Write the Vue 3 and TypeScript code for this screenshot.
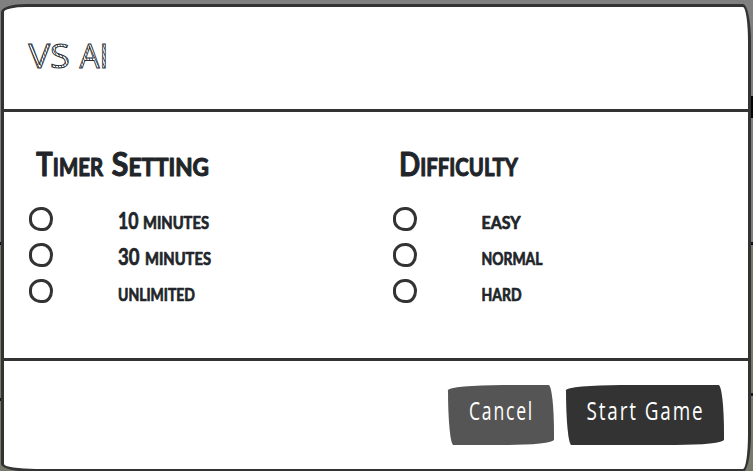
<script setup lang="ts">
import { ref } from 'vue'

interface Word { cap: string; rest: string; x: number; width: number }
interface Choice { value: string; words: Word[] }
interface Group { name: string; title: Word[]; choices: Choice[] }

const word = (cap: string, rest: string, x: number, width: number): Word => ({ cap, rest, x, width })

const groups: Group[] = [
  {
    name: 'timer',
    title: [word('T', 'IMER', 0, 67), word('S', 'ETTING', 75.5, 97.5)],
    choices: [
      { value: '10', words: [word('10', '', 0, 20.5), word('', 'MINUTES', 25, 66)] },
      { value: '30', words: [word('30', '', 0, 21.5), word('', 'MINUTES', 27, 66)] },
      { value: 'unlimited', words: [word('', 'UNLIMITED', 0, 77)] },
    ],
  },
  {
    name: 'difficulty',
    title: [word('D', 'IFFICULTY', -1, 119)],
    choices: [
      { value: 'easy', words: [word('', 'EASY', -0.5, 39)] },
      { value: 'normal', words: [word('', 'NORMAL', -0.5, 61)] },
      { value: 'hard', words: [word('', 'HARD', -0.5, 40)] },
    ],
  },
]
const selected = ref<Record<string, string>>({})
</script>

<template>
  <div class="backdrop">
    <section class="modal" role="dialog">
      <header class="head">
        <svg class="title" width="84" height="36">
          <defs>
            <pattern id="hatch" width="2.6" height="2.6" patternUnits="userSpaceOnUse" patternTransform="rotate(-25)">
              <rect width="3" height="3" fill="#fff" />
              <path d="M0 0V3" stroke="#30353a" stroke-width="1.5" />
            </pattern>
          </defs>
          <text x="0.5" y="28.5" textLength="41.5" lengthAdjust="spacingAndGlyphs">VS</text>
          <text x="51.5" y="28.5" textLength="29" lengthAdjust="spacingAndGlyphs">AI</text>
        </svg>
      </header>
      <main class="body">
        <fieldset v-for="group in groups" :key="group.name" class="group">
          <svg class="heading" width="200" height="40">
            <text v-for="w in group.title" :key="w.rest" :x="w.x" y="29.5" :textLength="w.width" lengthAdjust="spacingAndGlyphs"><tspan class="cap">{{ w.cap }}</tspan><tspan>{{ w.rest }}</tspan></text>
          </svg>
          <label v-for="choice in group.choices" :key="choice.value" class="row">
            <input v-model="selected[group.name]" type="radio" :name="group.name" :value="choice.value" />
            <svg class="choice" width="110" height="24">
              <text v-for="w in choice.words" :key="w.x" :class="{ cap: w.cap }" :x="w.x" y="22" :textLength="w.width" lengthAdjust="spacingAndGlyphs">{{ w.cap || w.rest }}</text>
            </svg>
          </label>
        </fieldset>
      </main>
      <footer class="foot">
        <button class="btn cancel" type="button">
          <svg width="64" height="30"><text x="0" y="20" textLength="65" lengthAdjust="spacingAndGlyphs">Cancel</text></svg>
        </button>
        <button class="btn start" type="button">
          <svg width="116" height="30"><text x="-0.5" y="20" textLength="118" lengthAdjust="spacingAndGlyphs">Start Game</text></svg>
        </button>
      </footer>
    </section>
  </div>
</template>

<style>
body { margin: 0; overflow: hidden; }
</style>

<style scoped>
.backdrop {
  box-sizing: border-box;
  width: 753px;
  height: 471px;
  padding: 4px 2px 0 1px;
  overflow: hidden;
  background:
    linear-gradient(#050505, #050505) 751px 96px / 2px 22px no-repeat,
    linear-gradient(#191919, #191919) 751px 393px / 2px 3px no-repeat,
    linear-gradient(#191919, #191919) 0 398px / 1px 3px no-repeat,
    linear-gradient(#808080 242px, #111 242px, #111 245px, #7a7a6c 245px);
}
.modal {
  box-sizing: border-box;
  width: 750px;
  height: 468px;
  display: flex;
  flex-direction: column;
  border: 3px solid #333;
  border-radius: 25px 8px 8px 35px / 8px 38px 38px 8px;
  background: #fff;
}
svg { display: block; overflow: visible; }
.head {
  box-sizing: border-box;
  height: 105px;
  padding: 32px 24px;
  border-bottom: 3px solid #333;
}
.title text {
  font-family: "Open Sans", sans-serif;
  font-size: 33px;
  font-weight: 500;
  fill: url(#hatch);
  stroke: #292e33;
  stroke-width: .9;
}
.body {
  flex: 1;
  display: grid;
  grid-template-columns: 364px 1fr;
  padding: 34px 25px 0;
}
.group { min-width: 0; margin: 0; padding: 0; border: 0; }
.heading { margin: 0 0 21px 7px; }
.heading text, .choice text {
  font-family: Lato, sans-serif;
  font-weight: 700;
  fill: #212529;
  stroke: #212529;
  stroke-linejoin: round;
  stroke-linecap: round;
}
.heading text { font-size: 24px; stroke-width: 1.1; }
.heading .cap { font-size: 33px; stroke-width: .9; }
.choice text { font-size: 16.5px; stroke-width: .7; }
.choice .cap { font-size: 23px; stroke-width: .7; }
.row { display: flex; align-items: center; height: 24px; margin-bottom: 12px; }
.row input {
  appearance: none;
  box-sizing: border-box;
  width: 24px;
  height: 24px;
  margin: 0 65px 0 0;
  border: 3px solid #333;
  border-radius: 50% 45% 40% 50% / 45% 50% 50% 45%;
  background: #fff;
}
.row input:checked { background: radial-gradient(circle, #333 4px, transparent 5px); }
.foot {
  box-sizing: border-box;
  height: 111px;
  display: flex;
  justify-content: flex-end;
  align-items: flex-start;
  gap: 12px;
  padding: 24px 24px 0;
  border-top: 3px solid #333;
}
.btn {
  height: 60px;
  padding: 15px 21px;
  border: 0;
  border-radius: 255px 25px 225px 25px / 25px 225px 25px 255px;
}
.btn text { font-family: "Open Sans", "Noto Sans", sans-serif; font-size: 25px; letter-spacing: 2.5px; fill: #fff; }
.cancel { background: #555; }
.start { background: #333; }
</style>
